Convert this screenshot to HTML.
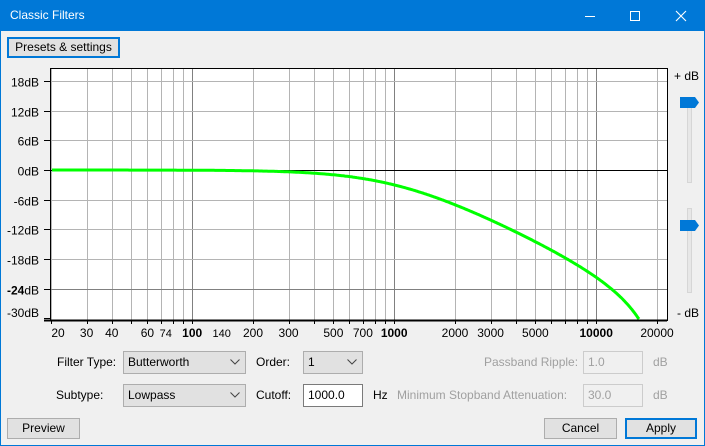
<!DOCTYPE html>
<html><head><style>
body{margin:0;width:705px;height:446px;overflow:hidden;background:#f0f0f0;font-family:"Liberation Sans",sans-serif;font-size:12px;color:#000;position:relative}
.win{position:absolute;left:0;top:0;width:703px;height:444px;border:1px solid #0078d7}
.title{position:absolute;left:0;top:0;width:705px;height:31px;background:#0078d7;color:#fff}
.abs{position:absolute;white-space:nowrap}
.btn{position:absolute;background:#e1e1e1;border:1px solid #adadad;text-align:center;box-sizing:border-box;line-height:18px}
.sel{position:absolute;background:#e1e1e1;border:1px solid #adadad;box-sizing:border-box;padding-left:4px;line-height:20px}
.sel svg{position:absolute;right:5px;top:7px}
.dis{color:#a0a0a0}
.inp{position:absolute;box-sizing:border-box;padding-left:4px;line-height:20px}
</style></head><body>
<div class="win"></div>
<div class="title">
<span class="abs" style="left:10px;top:8px;font-size:12px">Classic Filters</span>
<svg class="abs" style="left:580px;top:10px" width="120" height="14"><line x1="5" y1="6.5" x2="15" y2="6.5" stroke="#fff"/><rect x="50.5" y="1.5" width="9" height="9" fill="none" stroke="#fff"/><path d="M96 1 L106 11 M106 1 L96 11" stroke="#fff" stroke-width="1.1"/></svg>
</div>
<div class="btn" style="left:7px;top:37px;width:113px;height:21px;border:2px solid #0078d7;line-height:17px">Presets &amp; settings</div>

<svg id="plot" class="abs" style="left:0;top:60px" width="705" height="285"></svg>

<div class="abs" style="left:674px;top:69px">+ dB</div>
<div class="abs" style="left:677px;top:306px">- dB</div>
<div class="abs" style="left:687px;top:103px;width:3px;height:78px;background:#e7e7e7;border:1px solid #d6d6d6"></div>
<div class="abs" style="left:687px;top:208px;width:3px;height:83px;background:#e7e7e7;border:1px solid #d6d6d6"></div>
<svg class="abs" style="left:680px;top:97px" width="20" height="12"><path d="M0 0H15L19 5.5L15 11H0Z" fill="#0078d7"/></svg>
<svg class="abs" style="left:680px;top:220px" width="20" height="12"><path d="M0 0H15L19 5.5L15 11H0Z" fill="#0078d7"/></svg>

<div class="abs" style="left:57px;top:355px">Filter Type:</div>
<div class="sel" style="left:123px;top:351px;width:123px;height:23px">Butterworth<svg width="10" height="6"><path d="M0.5 0.5L5 5L9.5 0.5" fill="none" stroke="#444"/></svg></div>
<div class="abs" style="left:256px;top:355px">Order:</div>
<div class="sel" style="left:303px;top:351px;width:60px;height:23px">1<svg width="10" height="6"><path d="M0.5 0.5L5 5L9.5 0.5" fill="none" stroke="#444"/></svg></div>
<div class="abs" style="left:56px;top:388px">Subtype:</div>
<div class="sel" style="left:123px;top:384px;width:123px;height:23px">Lowpass<svg width="10" height="6"><path d="M0.5 0.5L5 5L9.5 0.5" fill="none" stroke="#444"/></svg></div>
<div class="abs" style="left:256px;top:388px">Cutoff:</div>
<div class="inp" style="left:303px;top:384px;width:60px;height:23px;background:#fff;border:1px solid #7a7a7a">1000.0</div>
<div class="abs" style="left:373px;top:388px">Hz</div>
<div class="abs dis" style="left:484px;top:355px">Passband Ripple:</div>
<div class="inp dis" style="left:583px;top:351px;width:60px;height:23px;border:1px solid #cccccc">1.0</div>
<div class="abs dis" style="left:653px;top:355px">dB</div>
<div class="abs dis" style="left:397px;top:388px">Minimum Stopband Attenuation:</div>
<div class="inp dis" style="left:583px;top:384px;width:60px;height:23px;border:1px solid #cccccc">30.0</div>
<div class="abs dis" style="left:653px;top:388px">dB</div>

<div class="btn" style="left:7px;top:418px;width:73px;height:21px">Preview</div>
<div class="btn" style="left:544px;top:418px;width:73px;height:21px">Cancel</div>
<div class="btn" style="left:625px;top:418px;width:72px;height:21px;border:2px solid #0078d7;line-height:17px">Apply</div>

<script>
var s='',O=60;
function X(f){return 51+202*Math.log10(f/20);}
function Y(d){return 170-4.95*d-O;}
var L=51,R=667,T=69-O,B=320-O;
s+='<rect x="'+L+'" y="'+T+'" width="'+(R-L)+'" height="'+(B-T)+'" fill="#fff"/>';
var fs=[];[1,2,3,4,5,6,7,8,9].forEach(function(m){[10,100,1000,10000].forEach(function(d){var f=m*d;if(f>=20&&f<=22000)fs.push(f);});});
fs.push(20000);
fs.forEach(function(f){var x=Math.round(X(f))+0.5;var dark=(f==100||f==1000||f==10000);
s+='<line x1="'+x+'" y1="'+T+'" x2="'+x+'" y2="'+B+'" stroke="'+(dark?'#808080':'#b4b4b4')+'"/>';
s+='<line x1="'+x+'" y1="'+B+'" x2="'+x+'" y2="'+(B+4)+'" stroke="#000"/>';});
[18,12,6,0,-6,-12,-18,-24].forEach(function(d){var y=Math.round(Y(d))+0.5;
s+='<line x1="'+L+'" y1="'+y+'" x2="'+R+'" y2="'+y+'" stroke="'+(d==0?'#000':d==-24?'#808080':'#b4b4b4')+'"/>';
s+='<line x1="44" y1="'+y+'" x2="'+L+'" y2="'+y+'" stroke="#000"/>';
s+='<text x="39" y="'+(y+5)+'" text-anchor="end" font-size="12" font-family="Liberation Sans">'+(d==-24?'<tspan font-weight="bold">-24</tspan>dB':d+'dB')+'</text>';});
s+='<line x1="44" y1="'+(B-1.5)+'" x2="'+L+'" y2="'+(B-1.5)+'" stroke="#000"/>';
s+='<text x="39" y="'+(B-3)+'" text-anchor="end" font-size="12" font-family="Liberation Sans">-30dB</text>';
// curve
var p='',tc=Math.tan(Math.PI*1000/44100);
for(var x=L+1;x<=R;x++){var f=20*Math.pow(10,(x-51)/202);if(f>=22050)break;var r=Math.tan(Math.PI*f/44100)/tc;var db=-10*Math.log10(1+r*r);var y=Y(db);if(y>B-O*0-1){p+='L'+x+' '+(B-1);break;}p+=(p?'L':'M')+x+' '+y.toFixed(1);}
s+='<path d="'+p+'" fill="none" stroke="#00ff00" stroke-width="3"/>';
s+='<rect x="'+(L-0.5)+'" y="'+(T-0.5)+'" width="'+(R-L+1)+'" height="'+(B-T+1)+'" fill="none" stroke="#000"/>';
s+='<line x1="'+(L-7)+'" y1="'+(B+0.5)+'" x2="'+R+'" y2="'+(B+0.5)+'" stroke="#000" stroke-width="2"/>';
var lab=[[20,'20'],[30,'30'],[40,'40'],[60,'60'],[74,'74',1],[100,'100',2],[140,'140',1],[200,'200'],[300,'300'],[500,'500'],[700,'700'],[1000,'1000',2],[2000,'2000'],[3000,'3000'],[5000,'5000'],[10000,'10000',2],[20000,'20000']];
lab.forEach(function(a){var x=X(a[0]);if(a[0]==20)x=58;
s+='<text x="'+x+'" y="'+(337-O)+'" text-anchor="middle" font-size="'+(a[2]==1?11:12)+'" '+(a[2]==2?'font-weight="bold"':'')+' font-family="Liberation Sans">'+a[1]+'</text>';});
document.getElementById('plot').innerHTML=s;
</script>
</body></html>
